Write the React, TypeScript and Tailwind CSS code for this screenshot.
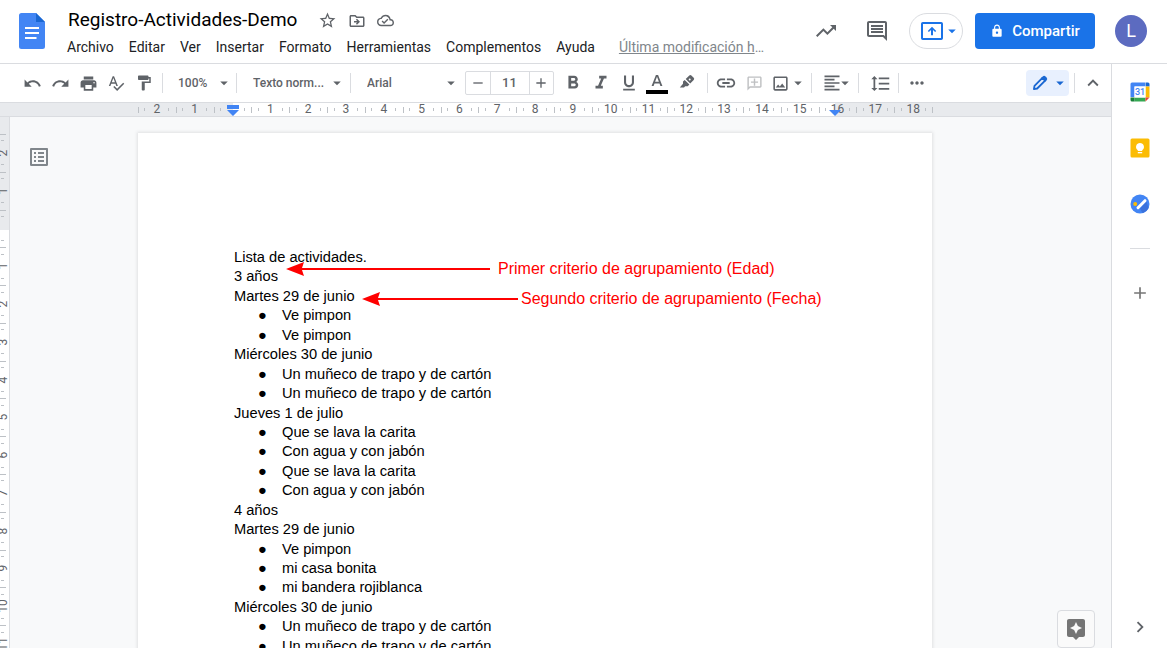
import type { ReactNode } from "react";
import {
  MdUndo,
  MdRedo,
  MdPrint,
  MdSpellcheck,
  MdFormatPaint,
  MdArrowDropDown,
  MdRemove,
  MdAdd,
  MdFormatBold,
  MdFormatItalic,
  MdFormatUnderlined,
  MdLink,
  MdOutlineAddComment,
  MdOutlineImage,
  MdFormatAlignLeft,
  MdFormatLineSpacing,
  MdMoreHoriz,
  MdExpandLess,
  MdChevronRight,
  MdStarOutline,
  MdOutlineDriveFileMove,
  MdOutlineCloudDone,
  MdTrendingUp,
  MdOutlineComment,
  MdLock,
  MdOutlineListAlt,
  MdAssistant,
} from "react-icons/md";

const menus = ["Archivo", "Editar", "Ver", "Insertar", "Formato", "Herramientas", "Complementos", "Ayuda"];

type Block = { text: string; items: string[] };

const blocks: Block[] = [
  { text: "Lista de actividades.", items: [] },
  { text: "3 años", items: [] },
  { text: "Martes 29 de junio", items: ["Ve pimpon", "Ve pimpon"] },
  { text: "Miércoles 30 de junio", items: ["Un muñeco de trapo y de cartón", "Un muñeco de trapo y de cartón"] },
  {
    text: "Jueves 1 de julio",
    items: ["Que se lava la carita", "Con agua y con jabón", "Que se lava la carita", "Con agua y con jabón"],
  },
  { text: "4 años", items: [] },
  { text: "Martes 29 de junio", items: ["Ve pimpon", "mi casa bonita", "mi bandera rojiblanca"] },
  { text: "Miércoles 30 de junio", items: ["Un muñeco de trapo y de cartón", "Un muñeco de trapo y de cartón"] },
];

function DocsLogo() {
  return (
    <svg width="26" height="36" viewBox="0 0 26 36" aria-hidden="true">
      <path d="M2.5 0H17l9 9v24.500a2.500 2.500 0 0 1-2.500 2.500h-21A2.500 2.500 0 0 1 0 33.500v-31A2.500 2.500 0 0 1 2.500 0z" fill="#4285f4" />
      <path d="M17 0l9 9h-9z" fill="#1967d2" />
      <path d="M6 14h14v2H6zM6 19h14v2H6zM6 24h11.500v2H6z" fill="#fff" />
    </svg>
  );
}

function CalendarIcon() {
  return (
    <svg width="20" height="20" viewBox="0 0 20 20" aria-hidden="true">
      <path d="M2 .5h13V4.500H4.500V15H.5V2A1.500 1.500 0 0 1 2 .5z" fill="#4285f4" />
      <path d="M15.500 .5H18A1.500 1.500 0 0 1 19.500 2v2.500h-4z" fill="#1967d2" />
      <path d="M15.500 4.500h4v11h-4z" fill="#fbbc04" />
      <path d="M4.500 15.500h11v4h-11z" fill="#34a853" />
      <path d="M.5 15.500h4v4H2A1.500 1.500 0 0 1 .5 18z" fill="#188038" />
      <path d="M15.500 15.500h4l-4 4z" fill="#ea4335" />
      <path d="M4.500 4.500h11v11h-11z" fill="#fff" />
      <text x="10" y="13.300" textAnchor="middle" fontSize="9" fontWeight="500" fontFamily="Roboto, sans-serif" fill="#4285f4">
        31
      </text>
    </svg>
  );
}

function KeepIcon() {
  return (
    <svg width="20" height="20" viewBox="0 0 20 20" aria-hidden="true">
      <rect x=".5" y=".5" width="19" height="19" rx="1.500" fill="#fbbc04" />
      <path d="M10 5a4 4 0 0 0-2.200 7.300V13h4.400v-.7A4 4 0 0 0 10 5z" fill="#fff" />
      <path d="M7.800 14h4.400v1.300H7.800z" fill="#fff" />
    </svg>
  );
}

function TasksIcon() {
  return (
    <svg width="20" height="20" viewBox="0 0 20 20" aria-hidden="true">
      <circle cx="10" cy="10" r="9.500" fill="#4285f4" />
      <path d="M10 14.500l6.500-7 2 6.500a9.500 9.500 0 0 1-6 5z" fill="#3b72dc" />
      <path d="M8 13.700l7-7" stroke="#fff" strokeWidth="3" strokeLinecap="round" />
      <circle cx="5.200" cy="10" r="2" fill="#fbbc04" />
    </svg>
  );
}

function PencilIcon() {
  return (
    <svg width="16" height="16" viewBox="0 0 16 16" aria-hidden="true">
      <path
        d="M1.900 14.100l.6-3.300 7.900-7.900 2.700 2.700-7.900 7.900z"
        fill="none"
        stroke="currentColor"
        strokeWidth="1.800"
        strokeLinejoin="round"
      />
      <path d="M9.300 2.800l1.400-1.400a2 2 0 0 1 2.800 0l1.100 1.100a2 2 0 0 1 0 2.800l-1.400 1.400z" fill="currentColor" />
    </svg>
  );
}

function Tool({ label, children }: { label: string; children: ReactNode }) {
  return (
    <button type="button" aria-label={label} className="flex h-7 w-7 items-center justify-center rounded-sm">
      {children}
    </button>
  );
}

function Divider({ className }: { className: string }) {
  return <span className={`h-5 w-px shrink-0 bg-[#dadce0] ${className}`} />;
}

function Picker({ label, value, className }: { label: string; value: string; className: string }) {
  return (
    <label className={`flex items-center justify-between ${className}`}>
      <select
        aria-label={label}
        defaultValue={value}
        className="min-w-0 flex-1 appearance-none bg-transparent text-xs font-medium text-[#5f6368] outline-none"
      >
        <option>{value}</option>
      </select>
      <MdArrowDropDown size={18} className="pointer-events-none shrink-0" />
    </label>
  );
}

function Header() {
  return (
    <header className="flex h-16 shrink-0 items-center border-b border-[#dadce0] pr-5 pb-px pl-[19px]">
      <a href="#" aria-label="Documentos" className="mr-[22px] shrink-0">
        <DocsLogo />
      </a>
      <div className="min-w-0 flex-1 pt-[3px]">
        <div className="flex h-7 items-center text-[#5f6368]">
          <h1 className="mr-[21px] pl-px text-[19px] text-black">Registro-Actividades-Demo</h1>
          <div className="flex items-center gap-[11px]">
            <button type="button" aria-label="Destacar">
              <MdStarOutline size={19} />
            </button>
            <button type="button" aria-label="Mover">
              <MdOutlineDriveFileMove size={18} />
            </button>
            <button type="button" aria-label="Estado del documento">
              <MdOutlineCloudDone size={17} />
            </button>
          </div>
        </div>
        <div className="flex h-6 items-center text-sm whitespace-nowrap text-[#202124]">
          <nav className="flex gap-[15px]">
            {menus.map((m) => (
              <button key={m} type="button">
                {m}
              </button>
            ))}
          </nav>
          <p className="ml-6 text-[#80868b]">
            <a href="#" className="underline">
              Última modificación h
            </a>
            …
          </p>
        </div>
      </div>
      <div className="flex shrink-0 items-center text-[#5f6368]">
        <button type="button" aria-label="Actividad">
          <MdTrendingUp size={24} />
        </button>
        <button type="button" aria-label="Comentarios" className="ml-[27px]">
          <MdOutlineComment size={24} />
        </button>
        <button
          type="button"
          aria-label="Presentar"
          className="ml-5 flex h-9 w-[54px] items-center rounded-full border border-[#dadce0] pl-[11px] text-[#1a73e8]"
        >
          <svg width="22" height="18" viewBox="0 0 22 18" aria-hidden="true">
            <rect x="1" y="1" width="20" height="16" rx=".8" fill="none" stroke="currentColor" strokeWidth="2" />
            <path d="M11 4.700L6.800 9l1.100 1.100 2.100-2v5.100h2V8.100l2.100 2L15.200 9z" fill="currentColor" />
          </svg>
          <MdArrowDropDown size={18} />
        </button>
        <button
          type="button"
          className="ml-3 flex h-9 w-[120px] items-center justify-center gap-2 rounded bg-[#1a73e8] text-[15px] font-medium text-white"
        >
          <MdLock size={14} />
          Compartir
        </button>
        <button
          type="button"
          aria-label="Cuenta"
          className="ml-5 flex h-8 w-8 items-center justify-center rounded-full bg-[#5c6bc0] text-lg text-white"
        >
          L
        </button>
      </div>
    </header>
  );
}

function Toolbar() {
  return (
    <div className="flex h-[38px] shrink-0 items-center pr-1 pl-[18px] text-[#5f6368]">
      <Tool label="Deshacer">
        <MdUndo size={19} />
      </Tool>
      <Tool label="Rehacer">
        <MdRedo size={19} />
      </Tool>
      <Tool label="Imprimir">
        <MdPrint size={19} />
      </Tool>
      <Tool label="Ortografía">
        <MdSpellcheck size={18} />
      </Tool>
      <Tool label="Copiar formato">
        <MdFormatPaint size={18} />
      </Tool>
      <Divider className="mr-[15px] ml-1" />
      <Picker label="Zoom" value="100%" className="w-[55px]" />
      <Divider className="mr-4 ml-[3px]" />
      <Picker label="Estilo" value="Texto norm..." className="w-[93px]" />
      <Divider className="mr-4 ml-1" />
      <Picker label="Fuente" value="Arial" className="w-[93px]" />
      <div className="ml-[5px] flex h-6 w-[89px] rounded-xs border border-[#dadce0]">
        <button type="button" aria-label="Reducir" className="flex flex-1 items-center justify-center">
          <MdRemove size={16} />
        </button>
        <input
          aria-label="Tamaño de fuente"
          defaultValue="11"
          className="w-10 border-x border-[#dadce0] text-center text-[13px] font-medium outline-none"
        />
        <button type="button" aria-label="Aumentar" className="flex flex-1 items-center justify-center">
          <MdAdd size={16} />
        </button>
      </div>
      <div className="ml-[5px] flex">
        <Tool label="Negrita">
          <MdFormatBold size={22} />
        </Tool>
        <Tool label="Cursiva">
          <MdFormatItalic size={22} />
        </Tool>
        <Tool label="Subrayado">
          <MdFormatUnderlined size={20} />
        </Tool>
        <Tool label="Color de texto">
          <svg width="22" height="24" viewBox="0 0 22 24" aria-hidden="true">
            <path d="M9.900 4L5.600 15h2l.9-2.500h5l.9 2.500h2L12.100 4zm-.8 6.800L11 5.800l1.900 5z" fill="currentColor" />
            <path d="M0 19h22v4H0z" fill="#000" />
          </svg>
        </Tool>
        <Tool label="Color de resaltado">
          <svg width="16" height="18" viewBox="0 0 16 18" className="ml-1" aria-hidden="true">
            <path d="M5.700 5.900l4.700 4.700-1.700 1.700H6.200L5 13.400H.8l3.200-3.600V7.600z" fill="currentColor" />
            <path d="M6.700 5l3.600-3.500a1.500 1.500 0 0 1 2.100 0l2.300 2.300a1.500 1.500 0 0 1 0 2.100l-3.500 3.600z" fill="currentColor" />
            <circle cx="10.700" cy="5.500" r="1" fill="#fff" />
          </svg>
        </Tool>
      </div>
      <Divider className="mr-1 ml-2" />
      <Tool label="Insertar enlace">
        <MdLink size={22} />
      </Tool>
      <Tool label="Añadir comentario">
        <MdOutlineAddComment size={17} className="-scale-x-100 opacity-40" />
      </Tool>
      <button type="button" aria-label="Insertar imagen" className="ml-[3px] flex h-7 items-center">
        <MdOutlineImage size={19} />
        <MdArrowDropDown size={18} className="-ml-px" />
      </button>
      <Divider className="mr-2.5 ml-1" />
      <button type="button" aria-label="Alinear" className="flex h-7 items-center">
        <MdFormatAlignLeft size={20} />
        <MdArrowDropDown size={18} className="-ml-1.5" />
      </button>
      <Divider className="mr-[7px] ml-1" />
      <Tool label="Interlineado">
        <MdFormatLineSpacing size={21} />
      </Tool>
      <Divider className="mr-1 ml-1" />
      <Tool label="Más">
        <MdMoreHoriz size={20} />
      </Tool>
      <button
        type="button"
        aria-label="Modo de edición"
        className="ml-auto flex h-[26px] w-[43px] items-center rounded-sm bg-[#e8f0fe] pl-1.5 text-[#1967d2]"
      >
        <PencilIcon />
        <MdArrowDropDown size={18} className="ml-[3px]" />
      </button>
      <Divider className="mr-1 ml-[5px]" />
      <Tool label="Ocultar menús">
        <MdExpandLess size={22} />
      </Tool>
    </div>
  );
}

function HorizontalRuler() {
  const marks = Array.from({ length: 21 }, (_, i) => i - 2);
  return (
    <div className="relative grid h-[15px] shrink-0 border-y border-[#dadce0] bg-[#e8eaed] text-xs leading-[13px] text-[#5f6368]">
      <div className="col-start-1 row-start-1 ml-[233px] w-[602px] bg-white" />
      <div className="col-start-1 row-start-1 ml-[138px] flex w-[795px] items-center">
        <div className="flex flex-1">
          {marks.map((m) => (
            <div key={m} className="flex flex-1 basis-0 items-center justify-between">
              <span className="h-1.5 w-px bg-[#bdc1c6]" />
              <span className="h-[3px] w-px bg-[#bdc1c6]" />
              <span className="flex h-[13px] w-3 justify-center">{m === 0 ? "" : Math.abs(m)}</span>
              <span className="h-[3px] w-px bg-[#bdc1c6]" />
              <span className="w-px" />
            </div>
          ))}
        </div>
        <span className="h-1.5 w-px bg-[#bdc1c6]" />
      </div>
      <svg width="12" height="11" viewBox="0 0 12 11" className="absolute top-0.5 left-[227px]" aria-hidden="true">
        <path d="M0 0h12v4H0zM0 5h12l-6 6z" fill="#4285f4" />
      </svg>
      <svg width="12" height="6" viewBox="0 0 12 6" className="absolute top-[7px] left-[829px]" aria-hidden="true">
        <path d="M0 0h12L6 6z" fill="#4285f4" />
      </svg>
    </div>
  );
}

function VerticalRuler() {
  const marks = Array.from({ length: 14 }, (_, i) => i - 2);
  return (
    <div className="grid w-2.5 shrink-0 grid-cols-1 content-start overflow-hidden border-r border-[#dadce0] bg-white text-xs text-[#5f6368]">
      <div className="col-start-1 row-start-1 h-[113px] bg-[#e8eaed]" />
      <div className="col-start-1 row-start-1 mt-[17px] flex h-[529px] flex-col">
        {marks.map((m) => (
          <div key={m} className="flex flex-1 basis-0 flex-col justify-between">
            <span className="h-px w-1.5 bg-[#bdc1c6]" />
            <span className="ml-px h-px w-[3px] bg-[#bdc1c6]" />
            <span className="flex h-3 w-1.5 items-center justify-center">
              <span className="-rotate-90">{m === 0 ? "" : Math.abs(m)}</span>
            </span>
            <span className="ml-px h-px w-[3px] bg-[#bdc1c6]" />
            <span className="h-px" />
          </div>
        ))}
      </div>
    </div>
  );
}

function Annotation({ text, className, length }: { text: string; className: string; length: number }) {
  return (
    <div className={`absolute flex items-center whitespace-nowrap ${className}`}>
      <svg width={length} height="14" viewBox={`0 0 ${length} 14`} aria-hidden="true">
        <path d={`M0 7L18 0L16 6H${length}V8H16L18 14z`} fill="#f00" />
      </svg>
      <span className="text-base leading-5 text-[#f00]">{text}</span>
    </div>
  );
}

function Page() {
  return (
    <article className="relative mt-4 min-h-[1123px] w-[794px] shrink-0 bg-white px-24 pt-[115px] font-['Liberation_Sans',Arial,sans-serif] text-[11pt] leading-[1.325] text-black shadow-[0_0_3px_1px_rgba(60,64,67,0.13)]">
      {blocks.map((b, i) => (
        <section key={i}>
          <p>{b.text}</p>
          {b.items.length > 0 && (
            <ul>
              {b.items.map((item, j) => (
                <li key={j} className="flex">
                  <span className="w-12 pl-6">●</span>
                  {item}
                </li>
              ))}
            </ul>
          )}
        </section>
      ))}
      <Annotation text="Primer criterio de agrupamiento (Edad)" length={204} className="top-[126px] left-[148px] gap-2" />
      <Annotation text="Segundo criterio de agrupamiento (Fecha)" length={156} className="top-[156px] left-56 gap-[3px]" />
    </article>
  );
}

function SidePanel() {
  return (
    <aside className="flex w-14 shrink-0 flex-col items-center border-l border-[#dadce0] pt-[18px] pb-2.5 text-[#5f6368]">
      <div className="flex flex-col gap-9">
        <button type="button" aria-label="Calendar">
          <CalendarIcon />
        </button>
        <button type="button" aria-label="Keep">
          <KeepIcon />
        </button>
        <button type="button" aria-label="Tasks">
          <TasksIcon />
        </button>
      </div>
      <span className="mt-[34px] h-px w-5 bg-[#dadce0]" />
      <button type="button" aria-label="Complementos" className="mt-[34px] text-[#757575]">
        <MdAdd size={20} />
      </button>
      <button type="button" aria-label="Ocultar panel" className="mt-auto">
        <MdChevronRight size={22} />
      </button>
    </aside>
  );
}

export default function App() {
  return (
    <div className="flex h-screen flex-col overflow-hidden bg-white font-[Roboto,sans-serif]">
      <Header />
      <div className="flex min-h-0 flex-1">
        <main className="flex min-w-0 flex-1 flex-col">
          <Toolbar />
          <HorizontalRuler />
          <div className="relative flex min-h-0 flex-1 overflow-hidden bg-[#f8f9fa]">
            <VerticalRuler />
            <div className="w-32 shrink-0 pt-7 pl-[17px]">
              <button type="button" aria-label="Mostrar esquema" className="text-[#80868b]">
                <MdOutlineListAlt size={24} />
              </button>
            </div>
            <Page />
            <button
              type="button"
              aria-label="Explorar"
              className="absolute right-4 bottom-0 flex h-[38px] w-[38px] items-center justify-center rounded-sm border border-[#dadce0] bg-[#fafafa] text-[#757575]"
            >
              <MdAssistant size={24} />
            </button>
          </div>
        </main>
        <SidePanel />
      </div>
    </div>
  );
}
